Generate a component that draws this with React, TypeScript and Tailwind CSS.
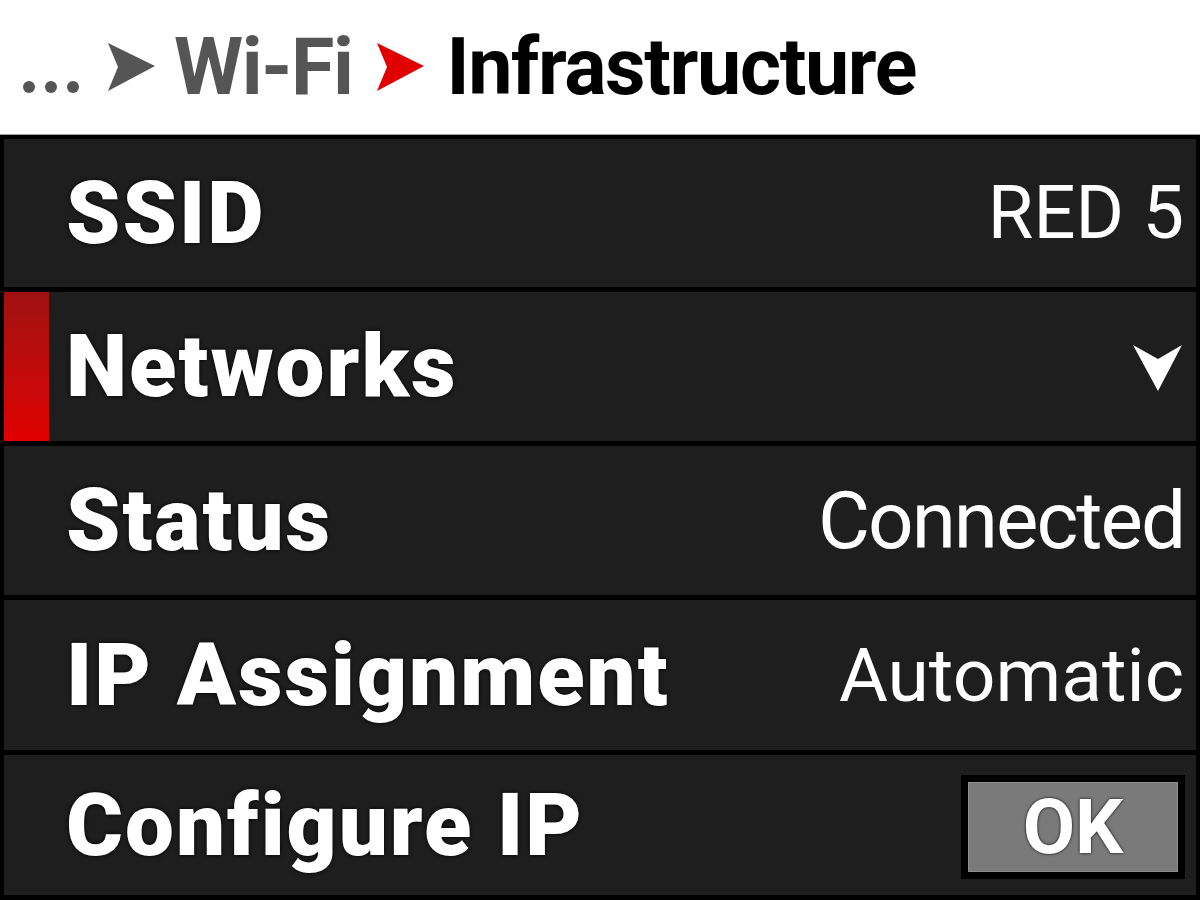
import React from "react";

type Row = {
  label: string;
  value?: string;
  valueClass?: string;
  kind?: "text" | "dropdown" | "button";
  active?: boolean;
  height: string;
};

const rows: Row[] = [
  { label: "SSID", value: "RED 5", valueClass: "text-[74px]", height: "h-[148px]" },
  { label: "Networks", kind: "dropdown", active: true, height: "h-[149px]" },
  { label: "Status", value: "Connected", valueClass: "text-[80px] tracking-[-2px]", height: "h-[149px]" },
  { label: "IP Assignment", value: "Automatic", valueClass: "text-[75px]", height: "h-[150px]" },
  { label: "Configure IP", kind: "button", height: "h-[140px]" },
];

function Crumb({ color }: { color: string }) {
  return (
    <svg width="47" height="48" viewBox="0 0 47 48" className="shrink-0">
      <path d="M0 0 L47 23 L0 48 L10 24 Z" fill={color} />
    </svg>
  );
}

function ChevronDown() {
  return (
    <svg width="50" height="48" viewBox="0 0 50 48">
      <path d="M0 0 L25 14 L49 0 L25 46 Z" fill="#ffffff" />
    </svg>
  );
}

export default function App() {
  return (
    <div className="w-[1200px] h-[900px] bg-black flex flex-col font-['Roboto',sans-serif] overflow-hidden">
      {/* breadcrumb */}
      <div className="h-[135px] shrink-0 bg-white border-b border-[#a0a0a0] flex items-center pl-[23px]">
        <div className="flex items-center gap-[10px] mt-[40px] mr-[29px]">
          <span className="w-[12px] h-[12px] rounded-full bg-[#555]" />
          <span className="w-[12px] h-[12px] rounded-full bg-[#555]" />
          <span className="w-[12px] h-[12px] rounded-full bg-[#555]" />
        </div>
        <Crumb color="#555555" />
        <span className="ml-[19px] text-[79px] font-bold text-[#555] leading-none tracking-[-1.4px]">Wi-Fi</span>
        <div className="ml-[25px]">
          <Crumb color="#e00000" />
        </div>
        <span className="ml-[22px] text-[79px] font-bold text-black leading-none tracking-[-1.4px]">
          Infrastructure
        </span>
      </div>

      {/* menu rows */}
      <div className="flex-1 flex flex-col gap-[5px] px-[4px] pt-[4px]">
        {rows.map((row) => (
          <div key={row.label} className={`${row.height} shrink-0 bg-[#1e1e1e] flex items-center`}>
            <div
              className={`w-[45px] self-stretch shrink-0 ${
                row.active ? "bg-gradient-to-b from-[#a01010] to-[#e00000]" : ""
              }`}
            />
            <span className="ml-[17px] text-[87px] font-black tracking-[2px] text-white leading-none [text-shadow:0_0_4px_#000]">
              {row.label}
            </span>
            <div className="ml-auto pr-[12px] flex items-center">
              {row.kind === "dropdown" && (
                <div className="pr-[1px] pt-[4px]">
                  <ChevronDown />
                </div>
              )}
              {row.kind === "button" && (
                <div className="bg-black p-[7px] -mr-[1px] mt-[4px]">
                  <div className="w-[210px] h-[90px] bg-[#7a7a7a] border border-[#8e8e8e] flex items-center justify-center">
                    <span className="text-[76px] font-bold text-white leading-none [text-shadow:0_0_3px_#000]">OK</span>
                  </div>
                </div>
              )}
              {row.value && (
                <span className={`${row.valueClass} font-normal text-white leading-none`}>{row.value}</span>
              )}
            </div>
          </div>
        ))}
      </div>
    </div>
  );
}
